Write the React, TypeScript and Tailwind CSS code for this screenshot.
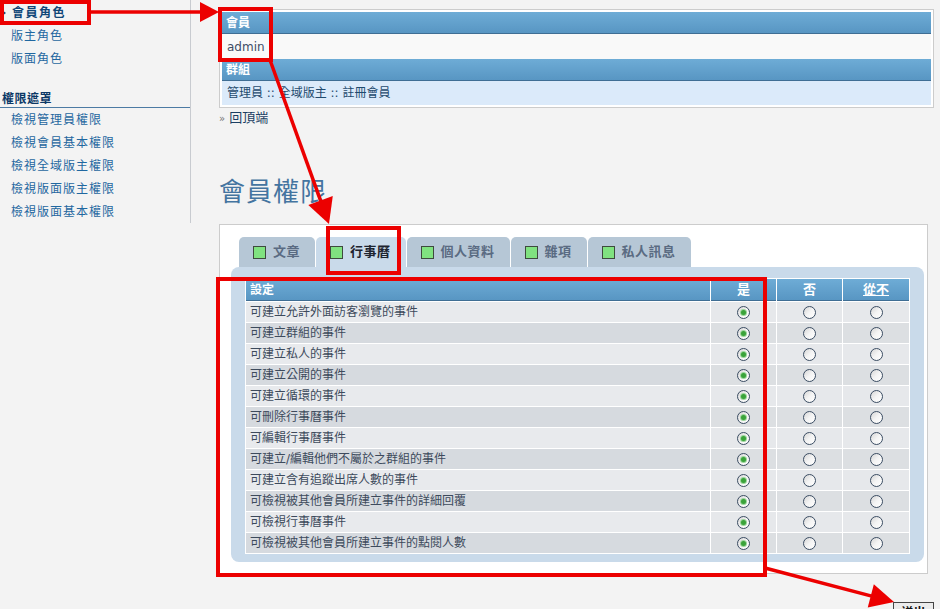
import clsx from "clsx";

const roleLinks = [
  { label: "會員角色", current: true },
  { label: "版主角色" },
  { label: "版面角色" },
];

const maskLinks = [
  "檢視管理員權限",
  "檢視會員基本權限",
  "檢視全域版主權限",
  "檢視版面版主權限",
  "檢視版面基本權限",
];

const tabs = [
  { label: "文章" },
  { label: "行事曆", active: true },
  { label: "個人資料" },
  { label: "雜項" },
  { label: "私人訊息" },
];

const settings = [
  "可建立允許外面訪客瀏覽的事件",
  "可建立群組的事件",
  "可建立私人的事件",
  "可建立公開的事件",
  "可建立循環的事件",
  "可刪除行事曆事件",
  "可編輯行事曆事件",
  "可建立/編輯他們不屬於之群組的事件",
  "可建立含有追蹤出席人數的事件",
  "可檢視被其他會員所建立事件的詳細回覆",
  "可檢視行事曆事件",
  "可檢視被其他會員所建立事件的點閱人數",
];

function Radio({ checked }: { checked?: boolean }) {
  return (
    <span className="mx-auto grid h-[13px] w-[13px] place-items-center rounded-full border border-[#3b4d63] bg-gradient-to-br from-[#d6d6d6] via-[#f4f4f4] to-white">
      {checked && <span className="h-[5px] w-[5px] rounded-full bg-[#3aa33a] ring-1 ring-[#9ad59a]" />}
    </span>
  );
}

type Pt = [number, number];

// red callout arrow: shaft plus a filled head at `to`
function Arrow({ from, to, head, half }: { from: Pt; to: Pt; head: number; half: number }) {
  const [x1, y1] = from;
  const [x2, y2] = to;
  const len = Math.hypot(x2 - x1, y2 - y1);
  const ux = (x2 - x1) / len;
  const uy = (y2 - y1) / len;
  const bx = x2 - ux * head;
  const by = y2 - uy * head;
  const px = -uy * half;
  const py = ux * half;
  return (
    <g>
      <line x1={x1} y1={y1} x2={bx + ux} y2={by + uy} stroke="#ec0000" strokeWidth={3.5} />
      <polygon points={`${x2},${y2} ${bx + px},${by + py} ${bx - px},${by - py}`} fill="#ec0000" />
    </g>
  );
}

function Callouts() {
  return (
    <svg className="pointer-events-none absolute left-0 top-0" width={940} height={609}>
      <g fill="none" stroke="#ec0000" strokeWidth={4}>
        <rect x={2} y={2} width={87} height={21} />
        <rect x={220} y={9} width={51} height={51} />
        <rect x={328} y={228} width={71} height={45} />
        <rect x={218} y={279} width={547} height={296} />
      </g>
      <Arrow from={[89, 12]} to={[219, 12]} head={19} half={10} />
      <Arrow from={[270, 60]} to={[329, 224]} head={25} half={13} />
      <Arrow from={[765, 568]} to={[894, 602]} head={24} half={12} />
    </svg>
  );
}

const headBar = "border-b border-[#3f6e94] bg-gradient-to-b from-[#6eacd6] to-[#5896c3]";

export default function App() {
  return (
    <div className="relative flex h-[609px] w-[940px] overflow-hidden bg-[#f3f3f3] font-['DejaVu_Sans','Noto_Sans_CJK_TC',sans-serif] text-[12px] text-[#333]">
      <aside className="h-[223px] w-[191px] shrink-0 border-r border-[#c8cbd0]">
        <ul className="pt-[1px]">
          {roleLinks.map((l) => (
            <li key={l.label} className="flex h-[23px] items-center">
              {l.current ? (
                <>
                  <span className="ml-[2px] mr-[6px] h-0 w-0 border-y-[3px] border-l-[4px] border-y-transparent border-l-[#0f4677]" />
                  <span className="font-bold tracking-[1.5px] text-[#0f4677]">{l.label}</span>
                </>
              ) : (
                <span className="pl-[11px] tracking-[1px] text-[#1f67a0]">{l.label}</span>
              )}
            </li>
          ))}
        </ul>
        <div className="mt-[20px] flex h-[18px] items-center border-b border-[#4c7aa3] pl-[2px] font-bold tracking-[0.5px] text-[#0c3866]">
          權限遮罩
        </div>
        <ul>
          {maskLinks.map((l) => (
            <li key={l} className="flex h-[23px] items-center pl-[11px] tracking-[1px] text-[#1f67a0]">
              {l}
            </li>
          ))}
        </ul>
      </aside>

      <main className="ml-[28px] w-[715px] shrink-0 pt-[9px]">
        <div className="border border-[#cccccc] bg-white p-[2px]">
          <div className={clsx("flex h-[22px] items-center px-[4px] font-bold text-white", headBar)}>會員</div>
          <div className="flex h-[25px] items-center bg-[#f9f9f9] px-[5px] text-[#3f4d66]">admin</div>
          <div className={clsx("flex h-[22px] items-center px-[4px] font-bold text-white", headBar)}>群組</div>
          <div className="flex h-[24px] items-center bg-[#dbeafa] px-[5px] text-[#1f4a6e]">
            管理員 :: 全域版主 :: 註冊會員
          </div>
        </div>

        <div className="flex h-[20px] items-center gap-[4px]">
          <span className="text-[10px] text-[#777]">»</span>
          <span className="text-[13px] text-[#1b3f63]">回頂端</span>
        </div>

        <h1 className="mt-[51px] text-[26px] font-normal leading-none tracking-[1px] text-[#4474a0]">會員權限</h1>

        <div className="mt-[19px] w-[709px] border border-[#cccccc] bg-white pb-[11px] pl-[11px] pr-[3px] pt-[12px]">
          <div className="ml-[8px] flex gap-[1px]">
            {tabs.map((t) => (
              <div
                key={t.label}
                className={clsx(
                  "flex h-[30px] items-center gap-[7px] rounded-t-[5px] pl-[14px] pr-[15px] text-[13px] font-bold tracking-[0.5px]",
                  t.active ? "bg-[#c9daea] text-[#1d2430]" : "bg-[#b6c7d6] text-[#5a6b82]"
                )}
              >
                <span className="h-[13px] w-[13px] border border-[#3e4a3e] bg-[#80e280]" />
                {t.label}
              </div>
            ))}
          </div>

          <div className="rounded-[8px] bg-[#c9daea] px-[14px] pb-[8px] pt-[11px]">
            <table className="w-full table-fixed border-separate border-spacing-[1px] bg-white">
              <colgroup>
                <col className="w-[464px]" />
                <col className="w-[65px]" />
                <col className="w-[65px]" />
                <col />
              </colgroup>
              <thead>
                <tr className="h-[22px] font-bold text-white">
                  <th className={clsx("px-[4px] text-left", headBar)}>設定</th>
                  <th className={clsx("text-[13px]", headBar)}>是</th>
                  <th className={clsx("text-[13px]", headBar)}>否</th>
                  <th className={clsx("text-[13px] underline", headBar)}>從不</th>
                </tr>
              </thead>
              <tbody>
                {settings.map((s, i) => {
                  const odd = i % 2 === 0;
                  const cell = odd ? "bg-[#e6e8eb]" : "bg-[#dcdfe2]";
                  return (
                    <tr key={s} className="h-[20px]">
                      <td className={clsx("px-[4px] text-[#3d4a5c]", odd ? "bg-[#e8eaed]" : "bg-[#d6dadf]")}>{s}</td>
                      <td className={cell}>
                        <Radio checked />
                      </td>
                      <td className={cell}>
                        <Radio />
                      </td>
                      <td className={cell}>
                        <Radio />
                      </td>
                    </tr>
                  );
                })}
              </tbody>
            </table>
          </div>
        </div>

        <div className="mt-[28px] flex justify-end">
          <button className="h-[22px] w-[41px] border border-[#444] bg-[#ececec] text-[12px] font-bold text-[#111]">送出</button>
        </div>
      </main>

      <Callouts />
    </div>
  );
}
